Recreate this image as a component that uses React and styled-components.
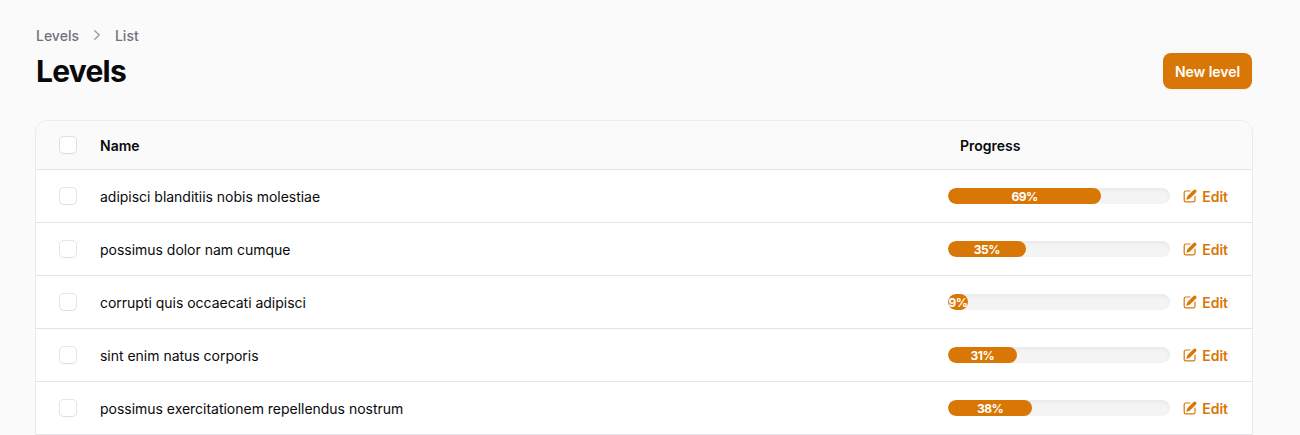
import React from "react";
import styled, { createGlobalStyle } from "styled-components";

const GlobalStyle = createGlobalStyle`
  *, *::before, *::after { box-sizing: border-box; }
  html, body { height: 100%; }
  body {
    margin: 0;
    background: #fafafa;
    color: #09090b;
    font-family: Inter, "Liberation Sans", sans-serif;
    font-size: 14px;
    line-height: 20px;
    -webkit-font-smoothing: antialiased;
    overflow: hidden;
  }
`;

const Page = styled.main`
  height: 100vh;
  overflow: hidden;
  padding: 25px 48px 0 36px;
`;

const Breadcrumbs = styled.nav`
  display: flex;
  align-items: center;
  gap: 8px;
  height: 20px;
  margin-bottom: 8px;
  color: #71717a;
  font-weight: 500;
`;

const Crumb = styled.span`
  padding-top: 2px;
`;

const Header = styled.header`
  display: flex;
  align-items: center;
  justify-content: space-between;
  margin-bottom: 32px;
`;

const Title = styled.h1`
  margin: 0;
  font-size: 30px;
  line-height: 36px;
  font-weight: 700;
  letter-spacing: -0.025em;
`;

const PrimaryButton = styled.button`
  border: 0;
  border-radius: 8px;
  padding: 9px 12px 7px;
  background: #d97706;
  color: #fff;
  font: inherit;
  font-weight: 600;
  letter-spacing: -0.06px;
  box-shadow: 0 1px 2px rgba(0, 0, 0, 0.05);
`;

const Card = styled.section`
  overflow: hidden;
  border-radius: 12px 12px 0 0;
  background: #fff;
  box-shadow: 0 0 0 1px rgba(9, 9, 11, 0.05), 0 1px 2px rgba(0, 0, 0, 0.05);
`;

const Row = styled.div`
  display: grid;
  grid-template-columns: 64px 1fr 222px 82px;
  align-items: center;
  height: ${(p) => (p.$head ? 49 : 53)}px;
  border-bottom: 1px solid #e4e4e7;
  background: ${(p) => (p.$head ? "#fafafa" : "#fff")};
`;

const Checkbox = styled.input`
  appearance: none;
  width: 16px;
  height: 16px;
  margin: 0 0 0 24px;
  border-radius: 4px;
  background: #fff;
  box-shadow: 0 0 0 1px rgba(9, 9, 11, 0.1), 0 1px 2px rgba(0, 0, 0, 0.05);
`;

const HeadLabel = styled.span`
  padding-left: ${(p) => p.$inset || 0}px;
  padding-top: 1px;
  font-weight: 600;
`;

const Name = styled.span`
  padding-top: 1px;
  line-height: 24px;
  letter-spacing: -0.02px;
`;

const Track = styled.div`
  height: 16px;
  overflow: hidden;
  border-radius: 8px;
  background: #f4f4f5;
  box-shadow: inset 0 2px 4px rgba(0, 0, 0, 0.05);
`;

const Fill = styled.div`
  display: flex;
  justify-content: center;
  height: 16px;
  overflow: hidden;
  border-radius: 8px;
  background: #d97706;
  color: #fff;
  font-size: 12px;
  line-height: 17px;
  font-weight: 700;
  letter-spacing: -0.5px;
`;

const EditLink = styled.a`
  display: flex;
  align-items: center;
  justify-content: flex-end;
  gap: 4px;
  padding-right: 24px;
  color: #d97706;
  font-weight: 600;
`;

const EditText = styled.span`
  padding-top: 1px;
`;

const ChevronRight = () => (
  <svg width="20" height="20" viewBox="0 0 20 20" fill="#a1a1aa">
    <path
      fillRule="evenodd"
      clipRule="evenodd"
      d="M7.21 14.77a.75.75 0 01.02-1.06L11.168 10 7.23 6.29a.75.75 0 111.04-1.08l4.5 4.25a.75.75 0 010 1.08l-4.5 4.25a.75.75 0 01-1.06-.02z"
    />
  </svg>
);

const PencilSquare = () => (
  <svg width="16" height="16" viewBox="0 0 20 20" fill="currentColor">
    <path d="m5.433 13.917 1.262-3.155A4 4 0 0 1 7.58 9.42l6.92-6.918a2.121 2.121 0 0 1 3 3l-6.92 6.918c-.383.383-.84.685-1.343.886l-3.154 1.262a.5.5 0 0 1-.65-.65Z" />
    <path d="M3.5 5.75c0-.69.56-1.25 1.25-1.25H10A.75.75 0 0 0 10 3H4.75A2.75 2.75 0 0 0 2 5.75v9.5A2.75 2.75 0 0 0 4.75 18h9.5A2.75 2.75 0 0 0 17 15.25V10a.75.75 0 0 0-1.5 0v5.25c0 .69-.56 1.25-1.25 1.25h-9.5c-.69 0-1.25-.56-1.25-1.25v-9.5Z" />
  </svg>
);

const levels = [
  { name: "adipisci blanditiis nobis molestiae", progress: 69 },
  { name: "possimus dolor nam cumque", progress: 35 },
  { name: "corrupti quis occaecati adipisci", progress: 9 },
  { name: "sint enim natus corporis", progress: 31 },
  { name: "possimus exercitationem repellendus nostrum", progress: 38 },
];

export default function App() {
  return (
    <>
      <GlobalStyle />
      <Page>
        <Breadcrumbs>
          <Crumb>Levels</Crumb>
          <ChevronRight />
          <Crumb>List</Crumb>
        </Breadcrumbs>
        <Header>
          <Title>Levels</Title>
          <PrimaryButton>New level</PrimaryButton>
        </Header>
        <Card>
          <Row $head>
            <Checkbox type="checkbox" />
            <HeadLabel>Name</HeadLabel>
            <HeadLabel $inset={12}>Progress</HeadLabel>
          </Row>
          {levels.map((level) => (
            <Row key={level.name}>
              <Checkbox type="checkbox" />
              <Name>{level.name}</Name>
              <Track>
                <Fill style={{ width: `${level.progress}%` }}>{level.progress}%</Fill>
              </Track>
              <EditLink>
                <PencilSquare />
                <EditText>Edit</EditText>
              </EditLink>
            </Row>
          ))}
        </Card>
      </Page>
    </>
  );
}
